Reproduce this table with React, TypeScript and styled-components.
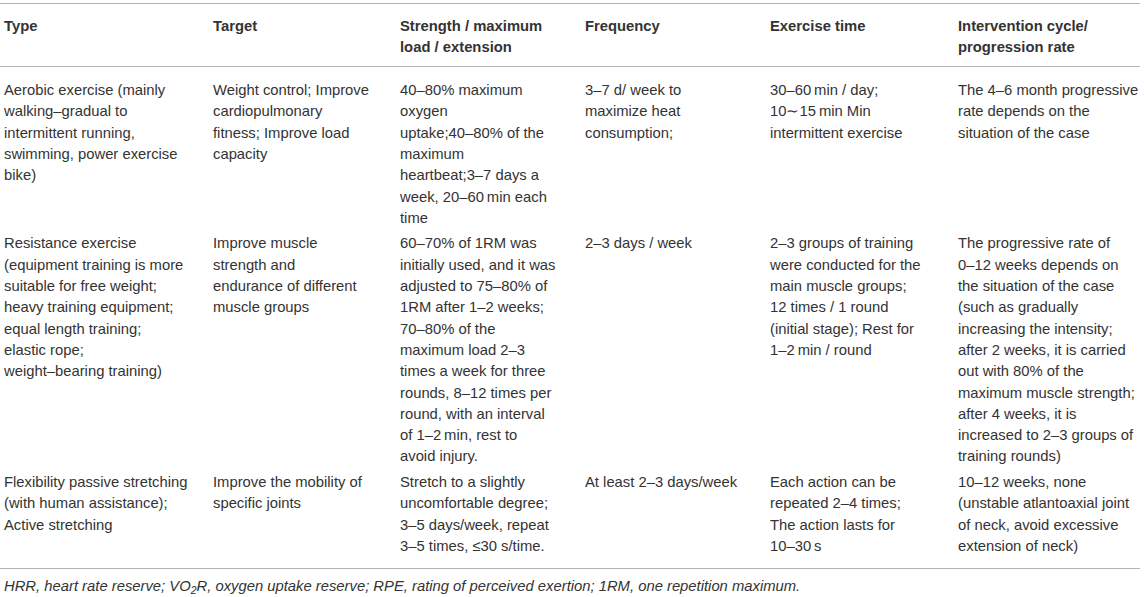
import React from "react";
import styled, { createGlobalStyle } from "styled-components";

const Global = createGlobalStyle`
  html, body { margin: 0; padding: 0; background: #ffffff; }
  body {
    font-family: "Liberation Sans", Arial, Helvetica, sans-serif;
    color: #333333;
  }
`;

const Page = styled.div`
  width: 1140px;
  padding-top: 3px;
`;

const Table = styled.div`
  display: flex;
  flex-direction: column;
  border-top: 1.5px solid #b4b4b4;
  border-bottom: 1.5px solid #b4b4b4;
`;

const Row = styled.div<{ $head?: boolean }>`
  display: grid;
  grid-template-columns: 209px 187px 185px 185px 188px 1fr;
  padding: ${(p) => (p.$head ? "11.5px 0 7.5px" : "2.1px 0")};
  border-bottom: ${(p) => (p.$head ? "1.5px solid #b4b4b4" : "none")};
`;

const Body = styled.div`
  display: flex;
  flex-direction: column;
  padding: 11.5px 0 9px;
`;

const Cell = styled.div<{ $head?: boolean }>`
  padding-left: 4px;
  font-size: 14.8px;
  line-height: 21.3px;
  font-weight: ${(p) => (p.$head ? 700 : 400)};
  white-space: pre-line;
`;

const Footnote = styled.p`
  margin: 7px 0 0;
  padding-left: 4px;
  font-size: 14.8px;
  line-height: 21.3px;
  font-style: italic;
`;

const Sub = styled.sub`
  font-size: 10.5px;
  line-height: 0;
  vertical-align: -3px;
`;

const headers = [
  "Type",
  "Target",
  "Strength / maximum\nload / extension",
  "Frequency",
  "Exercise time",
  "Intervention cycle/\nprogression rate",
];

const rows: string[][] = [
  [
    "Aerobic exercise (mainly\nwalking–gradual to\nintermittent running,\nswimming, power exercise\nbike)",
    "Weight control; Improve\ncardiopulmonary\nfitness; Improve load\ncapacity",
    "40–80% maximum\noxygen\nuptake;40–80% of the\nmaximum\nheartbeat;3–7 days a\nweek, 20–60\u2009min each\ntime",
    "3–7 d/ week to\nmaximize heat\nconsumption;",
    "30–60\u2009min / day;\n10∼15\u2009min Min\nintermittent exercise",
    "The 4–6 month progressive\nrate depends on the\nsituation of the case",
  ],
  [
    "Resistance exercise\n(equipment training is more\nsuitable for free weight;\nheavy training equipment;\nequal length training;\nelastic rope;\nweight–bearing training)",
    "Improve muscle\nstrength and\nendurance of different\nmuscle groups",
    "60–70% of 1RM was\ninitially used, and it was\nadjusted to 75–80% of\n1RM after 1–2 weeks;\n70–80% of the\nmaximum load 2–3\ntimes a week for three\nrounds, 8–12 times per\nround, with an interval\nof 1–2\u2009min, rest to\navoid injury.",
    "2–3 days / week",
    "2–3 groups of training\nwere conducted for the\nmain muscle groups;\n12 times / 1 round\n(initial stage); Rest for\n1–2\u2009min / round",
    "The progressive rate of\n0–12 weeks depends on\nthe situation of the case\n(such as gradually\nincreasing the intensity;\nafter 2 weeks, it is carried\nout with 80% of the\nmaximum muscle strength;\nafter 4 weeks, it is\nincreased to 2–3 groups of\ntraining rounds)",
  ],
  [
    "Flexibility passive stretching\n(with human assistance);\nActive stretching",
    "Improve the mobility of\nspecific joints",
    "Stretch to a slightly\nuncomfortable degree;\n3–5 days/week, repeat\n3–5 times, ≤30 s/time.",
    "At least 2–3 days/week",
    "Each action can be\nrepeated 2–4 times;\nThe action lasts for\n10–30\u2009s",
    "10–12 weeks, none\n(unstable atlantoaxial joint\nof neck, avoid excessive\nextension of neck)",
  ],
];

export default function App() {
  return (
    <Page>
      <Global />
      <Table>
        <Row $head>
          {headers.map((h) => (
            <Cell $head key={h}>
              {h}
            </Cell>
          ))}
        </Row>
        <Body>
          {rows.map((r, i) => (
            <Row key={i}>
              {r.map((c, j) => (
                <Cell key={j}>{c}</Cell>
              ))}
            </Row>
          ))}
        </Body>
      </Table>
      <Footnote>
        HRR, heart rate reserve; VO<Sub>2</Sub>R, oxygen uptake reserve; RPE,
        rating of perceived exertion; 1RM, one repetition maximum.
      </Footnote>
    </Page>
  );
}
